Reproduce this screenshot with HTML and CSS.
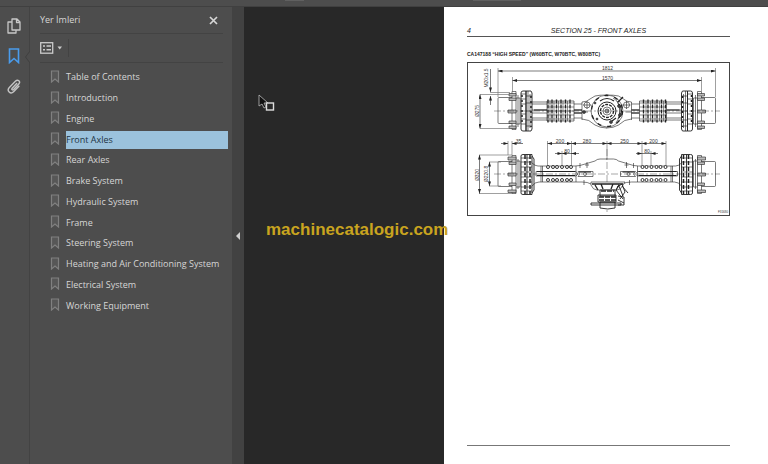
FILE: index.html
```html
<!DOCTYPE html>
<html lang="tr">
<head>
<meta charset="utf-8">
<title>Yer İmleri</title>
<link rel="stylesheet" href="styles.css">
</head>
<body>
<svg class="defs" aria-hidden="true">
  <symbol id="mark" viewBox="0 0 9 13"><path d="M1 1h7v11L4.500 9 1 12z" fill="#575757" stroke="#808080" stroke-width="1.200"/></symbol>
</svg>
<div class="topbar"><span class="tab"></span><span class="tab tab-wide"></span></div>
<div class="app">
  <nav class="rail">
    <button class="rail-btn" aria-label="Pages"><svg width="14" height="16" viewBox="0 0 14 16" fill="none" stroke="#c8c8c8" stroke-width="1.300" stroke-linejoin="round"><path d="M5 1h5l3 3v8H5zM9.500 1v3.500H13M5 4H1v11h8v-3"/></svg></button>
    <button class="rail-btn" aria-label="Bookmarks"><svg width="12" height="16" viewBox="0 0 12 16" fill="none" stroke="#4a9cec" stroke-width="1.600"><path d="M1.500 1h9v13.500L6 10.500l-4.500 4z"/></svg></button>
    <button class="rail-btn" aria-label="Attachments"><svg width="14" height="15" viewBox="0 0 14 15" fill="none" stroke="#c4c4c4" stroke-width="1.400" stroke-linecap="round"><path d="M9.700 4.500 5.200 9.300c-1 1.200.4 2.300 1.400 1.300l5.200-5.500c2.200-2.500-1-5.200-3.200-3L2.300 8.500c-3 3.300 1.200 7.300 4.300 4.200l5.300-5.500"/></svg></button>
    <svg class="notch" width="5" height="12" viewBox="0 0 5 12"><path d="M5 0 .5 6 5 12" fill="#4d4d4d" stroke="#414141"/></svg>
  </nav>
  <aside class="panel">
    <header class="panel-head">
      <h1>Yer İmleri</h1>
      <button class="close" aria-label="Close"><svg width="9" height="9" viewBox="0 0 9 9"><path d="M1 1l7 7M8 1 1 8" stroke="#d6d6d6" stroke-width="1.700"/></svg></button>
    </header>
    <div class="tools">
      <button class="options" aria-label="Options"><svg width="22" height="12" viewBox="0 0 22 12"><rect x=".7" y=".7" width="12" height="10.500" fill="none" stroke="#cbcbcb" stroke-width="1.300"/><path d="M3 4h2m1.500 0H11M3 7.700h2m1.500 0H11" stroke="#cbcbcb" stroke-width="1.500"/><path d="M17.500 4.500h4.500l-2.250 3z" fill="#cbcbcb"/></svg></button>
    </div>
    <ul class="marks">
      <li><svg><use href="#mark"/></svg><a href="#">Table of Contents</a></li>
      <li><svg><use href="#mark"/></svg><a href="#">Introduction</a></li>
      <li><svg><use href="#mark"/></svg><a href="#">Engine</a></li>
      <li><svg><use href="#mark"/></svg><a href="#" class="selected">Front Axles</a></li>
      <li><svg><use href="#mark"/></svg><a href="#">Rear Axles</a></li>
      <li><svg><use href="#mark"/></svg><a href="#">Brake System</a></li>
      <li><svg><use href="#mark"/></svg><a href="#">Hydraulic System</a></li>
      <li><svg><use href="#mark"/></svg><a href="#">Frame</a></li>
      <li><svg><use href="#mark"/></svg><a href="#">Steering System</a></li>
      <li><svg><use href="#mark"/></svg><a href="#">Heating and Air Conditioning System</a></li>
      <li><svg><use href="#mark"/></svg><a href="#">Electrical System</a></li>
      <li><svg><use href="#mark"/></svg><a href="#">Working Equipment</a></li>
    </ul>
  </aside>
  <button class="splitter" aria-label="Collapse panel"><svg width="4" height="8" viewBox="0 0 4 8"><path d="M4 0v8L0 4z" fill="#d0d0d0"/></svg></button>
  <main class="viewer">
    <article class="page">
      <header class="page-head"><span>4</span><span>SECTION 25 - FRONT AXLES</span><span></span></header>
      <h2>CA147188 “HIGH SPEED” (W60BTC, W70BTC, W80BTC)</h2>
      <svg class="figure" viewBox="467 62 263 154" fill="none" stroke="#222" stroke-width=".6">
        <defs>
          <marker id="arrow" viewBox="0 0 6 4" refX="6" refY="2" markerWidth="5" markerHeight="3" markerUnits="userSpaceOnUse" orient="auto-start-reverse"><path d="M0 0l6 2-6 2z" fill="#222" stroke="none"/></marker>
          <g id="top-half">
            <path d="M512 97.500h-13q-1 0-1 1v24q0 1 1 1h13M512 91.500h4v38h-4zM516 98h4v26h-4M518 95v32"/>
            <path d="M509 93.500h7v2.500h-7zM509 98h7v2.500h-7zM508 110h8v3h-8zM509 121h7v2.500h-7zM509 126h7v2.500h-7z" fill="#bbb"/>
            <path d="M521 93q0-2 2-2h3v40h-3q-2 0-2-2zM526 91h5l1 2v36l-1 2h-5z" stroke-width=".9"/>
            <path d="M521 94h5m-5 5h5m-5 5h5m-5 10h5m-5 5h5m-5 5h5M528 91v40M530 94v34M526 96h6m-6 7h6m-6 8h6m-6 9h6m-6 6h6"/>
            <path d="M522 95v30M531 96v31" stroke-width="1.500" stroke-dasharray="2 3"/>
            <path d="M532 102h15m-15 18h15M532 104h50m-50 14h50M582 102v18M532 110h50m-50 3h50"/>
            <path d="M534 110h13M574 110h8m-8 3h8" stroke-width="1.200"/>
            <path d="M547 101h27v20h-27z" fill="#fff"/>
            <path d="M548 99.500v23m4-23v23m4.500-23v23m4.500-23v23m4.500-23v23m4.500-23v23" stroke-width="1.300" stroke-dasharray="4 1"/>
            <path d="M547 103h27m-27 4h27m-27 4h27m-27 4h27m-27 4h27M550 101v20m4-20v20m4.500-20v20m4.500-20v20m4.500-20v20" stroke-width=".5"/>
            <path d="M582 102q5 0 8-3l5-3q4-1 12-1M582 119q7 0 13 6 5 3 12 3"/>
            <circle cx="587" cy="105" r="3"/><path d="M587 101v8m-4-4h8M582 112h6"/>
          </g>
          <g id="front-half">
            <path d="M512 161.500h-13q-1 0-1 1v23q0 1 1 1h13M512 155.500h4v38h-4zM516 161h4v26h-4M518 159v30"/>
            <path d="M508 157h8v3h-8zM509 162h7v2.500h-7zM508 173h8v3h-8zM509 183h7v2.500h-7zM508 190h8v2.500h-8z" fill="#bbb"/>
            <path d="M521 156q0-1.500 2-1.500h9v40h-9q-2 0-2-1.500zM527 154.500v40M532 156l2 3v31l-2 3" stroke-width=".9"/>
            <path d="M521 158h11m-11 4h11m-11 5h11m-11 5h11m-11 5h11m-11 5h11m-11 5h11m-11 4h11"/>
            <path d="M525 155v39M530 155v39" stroke-width="1.500" stroke-dasharray="4 2"/>
            <path d="M532 163q3 3 6 3h37q5 0 10-2l10-3q2-2 5-2h7M532 186q3-4 7-4h43q6 0 9 2M541 166v16M542.500 166v16M576 166v16M536 171.500h40l2 2.500-2 2H536zM578 171.500h15v5h-15l2-2.500z"/>
            <path d="M537 171.500h38m-38 4h38M579 172h12" stroke-width="1"/>
            <g fill="#fff" stroke-width=".9"><circle cx="548" cy="167" r="1.500"/><circle cx="553" cy="167" r="1.500"/><circle cx="557" cy="167" r="1.500"/><circle cx="562" cy="167" r="1.500"/><circle cx="567" cy="167" r="1.500"/><circle cx="571" cy="167" r="1.500"/><circle cx="548" cy="180" r="1.500"/><circle cx="553" cy="180" r="1.500"/><circle cx="557" cy="180" r="1.500"/><circle cx="562" cy="180" r="1.500"/><circle cx="567" cy="180" r="1.500"/><circle cx="571" cy="180" r="1.500"/></g>
            <circle cx="585" cy="174" r="1.500"/>
            <path d="M587 162v6m-2-3h4M580 163v5m4 12v5"/>
          </g>
        </defs>
        <rect x="467.500" y="62.500" width="262" height="153" stroke="#444" stroke-width="1"/>
        <use href="#top-half"/><use href="#top-half" transform="translate(1213.500) scale(-1 1)"/>
        <use href="#front-half"/><use href="#front-half" transform="translate(1213.500) scale(-1 1)"/>
        <path d="M592 104q5-9 14-9t15 9v14q-5 9-14 9t-15-9z" fill="#fff" stroke="none"/>
        <circle cx="607" cy="111" r="16"/><circle cx="607" cy="111" r="15.500" stroke-width="1.300" stroke-dasharray="4 6"/>
        <path d="M613 98q6 3 7 11t-4 14M617 101q5 9 1 18"/><circle cx="607" cy="111" r="9" stroke-width="1"/><circle cx="607" cy="111" r="6.500" stroke-width="1.300" stroke-dasharray="3 1"/><circle cx="607" cy="111" r="4"/><circle cx="607" cy="111" r="2" fill="#999"/>
        <path d="M600 101q7-5 14 0M618 102l5-5M619 104q5 7 0 14M612 121l4-3" stroke-width="1.200"/>
        <g fill="#444"><circle cx="595" cy="103" r="1"/><circle cx="611" cy="122" r="1.500"/><circle cx="619" cy="106" r="1.500"/><circle cx="620" cy="115" r="1.500"/><circle cx="597" cy="119" r="1"/><circle cx="584" cy="112" r="1.500"/></g>
        <path d="M494 111h226M494 174h226M607 149v64" stroke-dasharray="7 2 2 2" stroke-width=".4"/>
        <path d="M591 182h34l-2 3q-2 5-6 5h-20q-4 0-6-5z" fill="#fff"/>
        <path d="M592 184h31M595 185l3 5m3-6 2 5m8 0 2-5m3 6 3-5" stroke-width="1.300"/>
        <path d="M600 190h15v6h-15zM598 195h18v7h-18zM600 208v-6h15v6q-7 2-15 0z" fill="#fff" stroke-width=".9"/>
        <path d="M599 197h17m-17 3h17M601 191h13" stroke-width="1.300" stroke-dasharray="5 1"/>
        <path d="M591 203h30v2h-30zM617 187l5-3 3 8-5 7M618 196l6 1v8h-6M622 186l6 7M616 190l7 9m-5 1 6 3m-5-17 4 10" stroke-width=".9"/>
        <g stroke="#777" stroke-width=".7">
          <path d="M498 97V68M715.500 97V68M512.500 91V77M701.500 91V77M480 94.500h30M480 128.500h30M490 92.500h20M479 155h33M489 162h12M489 186h12M479 193.500h33M508 155V141M512 155V141M547.500 165V141M571.500 165V141M607 159V141M642 165V141M666 165V141M562 165v-14M651 165v-14"/>
        </g>
        <g stroke-width=".6" marker-start="url(#arrow)">
          <path class="dim" d="M498 71h217.500"/><path class="dim" d="M512.500 80.500h189"/><path class="dim" d="M480 94.500v34"/><path class="dim" d="M479.500 155v38.500"/><path class="dim" d="M489.500 162v24"/>
          <path class="dim-end" d="M490.500 69v23"/><path class="dim-end" d="M490.500 105v-9"/><path class="dim-end" d="M501 143.500h7"/><path class="dim-end" d="M523 143.500h-11"/><path class="dim" d="M547.500 143.500h24"/><path class="dim" d="M571.500 143.500H607"/><path class="dim" d="M607 143.500h35"/><path class="dim" d="M642 143.500h24"/><path class="dim-end" d="M555 153.500h7"/><path class="dim-end" d="M579 153.500h-7.500"/><path class="dim-end" d="M636 153.500h6"/><path class="dim-end" d="M658 153.500h-7"/><path d="M562 153.500h10M642 153.500h9"/>
        </g>
        <g class="dims">
          <text x="607.500" y="70">1812</text><text x="607.500" y="79.500">1570</text><text x="518.500" y="142.500">35</text><text x="560" y="142.500">200</text><text x="587" y="142.500">280</text><text x="624.500" y="142.500">250</text><text x="653.500" y="142.500">200</text><text x="567" y="152.500">80</text><text x="647" y="152.500">80</text><text x="723" y="213" class="plate">F31680</text>
          <text transform="translate(488 78) rotate(-90)">M20x1.5</text><text transform="translate(479 111) rotate(-90)">Ø275</text><text transform="translate(479 175) rotate(-90)">Ø320</text><text transform="translate(488 174) rotate(-90)">Ø220.8</text>
        </g>
      </svg>
      <footer class="page-foot"></footer>
    </article>
  </main>
</div>
<div class="watermark">machinecatalogic.com</div>
<svg class="cursor" width="17" height="18" viewBox="0 0 17 18"><path d="M1 1v11l3-2 2 4 2-1-2-4h4z" fill="#111" stroke="#bbb" stroke-width=".8"/><rect x="8.500" y="9" width="7" height="7" fill="#282828" stroke="#ddd" stroke-width="1.400"/></svg>
</body>
</html>
```
FILE: styles.css
```css
* { box-sizing: border-box; }
body {
  margin: 0;
  min-height: 100vh;
  display: flex;
  flex-direction: column;
  background: #4d4d4d;
  color: #d6d6d6;
  font: 9px/16px "Open Sans", "Noto Sans", sans-serif;
}
button { margin: 0; padding: 0; border: 0; background: none; display: flex; align-items: center; justify-content: center; }
h1, h2, ul { margin: 0; padding: 0; font-size: inherit; font-weight: normal; }
.defs { position: absolute; width: 0; height: 0; }
.topbar { height: 7px; display: flex; gap: 169px; padding-left: 285px; border-bottom: 1px solid #404040; }
.tab { width: 19px; height: 1px; background: #606060; }
.tab-wide { width: 48px; }
.app { flex: 1; display: grid; grid-template-columns: 30px 202px 12px 1fr; }

.rail { position: relative; border-right: 1px solid #434343; padding-top: 4px; }
.rail-btn { width: 28px; height: 30px; }
.rail-btn svg { display: block; }
.notch { position: absolute; right: -1px; top: 44px; }

.panel { padding: 0 9px 0 10px; }
.panel-head { display: flex; justify-content: space-between; align-items: center; height: 27px; border-bottom: 1px solid #434343; }
.close { width: 20px; height: 20px; }
.tools { height: 29px; border-bottom: 1px solid #434343; display: flex; align-items: center; }
.options { width: 29px; height: 18px; padding-right: 6px; border-right: 1px solid #434343; }
.marks { list-style: none; height: 249px; margin: 3px -5px 0 10px; display: grid; grid-template-rows: repeat(12, 1fr); }
.marks li { display: flex; align-items: center; gap: 6px; }
.marks svg { width: 10px; height: 13px; flex: none; }
.marks a { flex: 1; height: 18px; margin-top: 2px; line-height: 17px; color: inherit; text-decoration: none; white-space: nowrap; }
.marks .selected { background: #9bc2dc; color: #1d3443; }

.splitter { background: #424242; }

.viewer { background: #282828; display: grid; grid-template-columns: 200px 1fr; }
.page {
  grid-column: 2;
  display: flex;
  flex-direction: column;
  padding: 18px 38px 18px 23px;
  background: #fff;
  color: #222;
  font: 7px/10px "Liberation Sans", Arial, sans-serif;
}
.page-head { display: grid; grid-template-columns: 1fr auto 1fr; border-bottom: 1px solid #555; font-style: italic; padding-top: 1px; }
.page h2 { margin: 12px 0 3px; font-size: 5px; font-weight: bold; white-space: nowrap; }
.figure { display: block; width: 100%; }
.dim { marker-start: url(#arrow); marker-end: url(#arrow); }
.dim-end { marker-start: none; marker-end: url(#arrow); }
.dims { fill: #333; stroke: none; font-size: 5px; text-anchor: middle; }
.plate { font-size: 3px; }
.page-foot { margin-top: auto; border-top: 1px solid #777; }

.watermark {
  position: absolute;
  left: 266px;
  top: 219px;
  color: #c9a41f;
  font: bold 17px/22px "Liberation Sans", Arial, sans-serif;
}
.cursor { position: absolute; left: 258px; top: 94px; }
```
